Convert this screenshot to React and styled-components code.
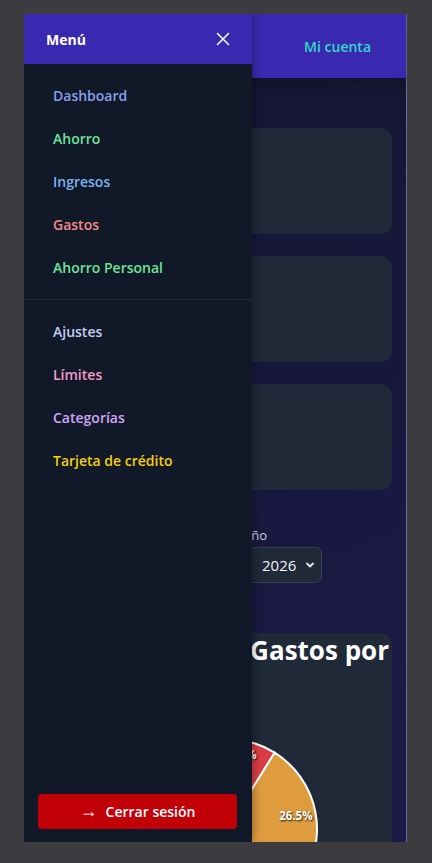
import React from 'react';
import styled, { createGlobalStyle } from 'styled-components';

const GlobalStyle = createGlobalStyle`
    * { box-sizing: border-box; }
    body {
        margin: 0;
        background: #3c3b3f;
        font-family: "Open Sans", "Liberation Sans", sans-serif;
    }
`;

const menuPrincipal = [
    { texto: 'Dashboard', color: '#8c9ef0' },
    { texto: 'Ahorro', color: '#6ee49b' },
    { texto: 'Ingresos', color: '#7fb3f0' },
    { texto: 'Gastos', color: '#f28b8b' },
    { texto: 'Ahorro Personal', color: '#6ee49b' },
];

const menuAjustes = [
    { texto: 'Ajustes', color: '#c3cdf5' },
    { texto: 'Límites', color: '#f39ccb' },
    { texto: 'Categorías', color: '#cfa6f5' },
    { texto: 'Tarjeta de crédito', color: '#f5cf12' },
];

// porciones del pie: inicio y fin en grados desde arriba, en sentido horario
const porciones = [
    { desde: -12, hasta: 32, color: '#dc3d45', label: '12.2%', radio: 74 },
    { desde: 32, hasta: 127.4, color: '#df9c3f', label: '26.5%', radio: 70 },
    { desde: 127.4, hasta: 215, color: '#3b82f6' },
    { desde: 215, hasta: 290, color: '#22c55e' },
    { desde: 290, hasta: 348, color: '#a855f7' },
];

const CX = 173;
const CY = 147;
const R = 90;

const punto = (grados, radio) => {
    const rad = (grados * Math.PI) / 180;
    return [CX + radio * Math.sin(rad), CY - radio * Math.cos(rad)];
};

const arco = (desde, hasta) => {
    const [x1, y1] = punto(desde, R);
    const [x2, y2] = punto(hasta, R);
    const grande = hasta - desde > 180 ? 1 : 0;
    return `M ${CX} ${CY} L ${x1} ${y1} A ${R} ${R} 0 ${grande} 1 ${x2} ${y2} Z`;
};

const App = () => {
    return (
        <>
            <GlobalStyle />
            <Marco>
                <Principal>
                    <Cabecera>
                        <span />
                        <MiCuenta>Mi cuenta</MiCuenta>
                    </Cabecera>
                    <Contenido>
                        <Tarjeta />
                        <Tarjeta />
                        <Tarjeta />
                        <Filtros>
                            <Grupo ancho="193px">
                                <Etiqueta>Mes</Etiqueta>
                                <Selector>
                                    <span>Enero</span>
                                    <Chevron />
                                </Selector>
                            </Grupo>
                            <Grupo ancho="79px">
                                <Etiqueta>Año</Etiqueta>
                                <Selector>
                                    <span>2026</span>
                                    <Chevron />
                                </Selector>
                            </Grupo>
                        </Filtros>
                        <TarjetaGrafico>
                            <Titulo>Distribución de Gastos por</Titulo>
                            <Pie viewBox="0 0 322 240" width="322" height="240">
                                {porciones.map((p, i) => (
                                    <path key={i} d={arco(p.desde, p.hasta)} fill={p.color} stroke="#fff" strokeWidth="2" />
                                ))}
                                {porciones.filter((p) => p.label).map((p) => {
                                    const [x, y] = punto((p.desde + p.hasta) / 2, p.radio);
                                    return (
                                        <PieLabel key={p.label} x={x} y={y} textAnchor="middle" dominantBaseline="middle">
                                            {p.label}
                                        </PieLabel>
                                    );
                                })}
                            </Pie>
                        </TarjetaGrafico>
                    </Contenido>
                </Principal>

                <Sidebar>
                    <SidebarCabecera>
                        <span>Menú</span>
                        <Cerrar aria-label="cerrar">
                            <svg width="14" height="14" viewBox="0 0 14 14">
                                <path d="M1.5 1.5 L12.5 12.5 M12.5 1.5 L1.5 12.5" stroke="#fff" strokeWidth="1.5" strokeLinecap="round" />
                            </svg>
                        </Cerrar>
                    </SidebarCabecera>
                    <Seccion>
                        {menuPrincipal.map((item) => (
                            <Enlace key={item.texto} color={item.color}>{item.texto}</Enlace>
                        ))}
                    </Seccion>
                    <Seccion>
                        {menuAjustes.map((item) => (
                            <Enlace key={item.texto} color={item.color}>{item.texto}</Enlace>
                        ))}
                    </Seccion>
                    <Pie2>
                        <BotonSalir>
                            <Flecha>→</Flecha>
                            Cerrar sesión
                        </BotonSalir>
                    </Pie2>
                </Sidebar>
            </Marco>
        </>
    );
}

const Chevron = () => (
    <svg width="10" height="10" viewBox="0 0 10 10">
        <path d="M2 3.5 L5 6.5 L8 3.5" fill="none" stroke="#e5e7eb" strokeWidth="1.8" strokeLinecap="round" strokeLinejoin="round" />
    </svg>
);

const Marco = styled.div`
    position: relative;
    margin: 14px 0 0 24px;
    width: 383px;
    height: 828px;
    overflow: hidden;
`;

const Principal = styled.div`
    width: 383px;
    height: 828px;
    background: linear-gradient(160deg, #141530 0%, #18183f 55%, #1c1a48 100%);
    border-right: 1px solid #6b6a98;
    display: flex;
    flex-direction: column;
`;

const Cabecera = styled.header`
    height: 64px;
    flex-shrink: 0;
    background: #3a29b0;
    display: flex;
    align-items: center;
    justify-content: space-between;
    padding: 0 35px 0 16px;
    box-shadow: 0 4px 10px rgba(0,0,0,.25);
`;

const MiCuenta = styled.span`
    color: #2fdcc4;
    font-size: 14px;
    font-weight: 600;
`;

const Contenido = styled.main`
    padding: 50px 14px 0 14px;
    display: flex;
    flex-direction: column;
`;

const Tarjeta = styled.div`
    height: 106px;
    background: #1f2937;
    border-radius: 12px;
    margin-bottom: 22px;
`;

const Filtros = styled.div`
    display: flex;
    gap: 12px;
    margin-top: 14px;
`;

const Grupo = styled.div`
    width: ${props => props.ancho};
    display: flex;
    flex-direction: column;
    gap: 3px;
`;

const Etiqueta = styled.label`
    color: #d1d5db;
    font-size: 13px;
    line-height: 18px;
`;

const Selector = styled.div`
    height: 36px;
    background: #1f2937;
    border: 1px solid #374151;
    border-radius: 6px;
    display: flex;
    align-items: center;
    justify-content: space-between;
    padding: 0 6px 0 18px;
    color: #f3f4f6;
    font-size: 15px;
`;

const TarjetaGrafico = styled.section`
    margin-top: 50px;
    background: #1f2937;
    border-radius: 12px;
    padding: 0 16px;
    height: 320px;
`;

const Titulo = styled.h2`
    margin: 0 -13px 0 0;
    display: flex;
    justify-content: flex-end;
    white-space: nowrap;
    color: #fff;
    font-size: 26px;
    font-weight: 700;
    line-height: 34px;
`;

const Pie = styled.svg`
    display: block;
    margin-top: 15px;
`;

const PieLabel = styled.text`
    fill: #fff;
    font-size: 11.5px;
    font-weight: 700;
    font-family: "Open Sans", sans-serif;
    text-shadow: 1px 1px 2px rgba(0,0,0,.85);
`;

const Sidebar = styled.aside`
    position: absolute;
    top: 0;
    left: 0;
    width: 228px;
    height: 100%;
    background: #111827;
    display: flex;
    flex-direction: column;
    box-shadow: 2px 0 8px rgba(0,0,0,.3);
`;

const SidebarCabecera = styled.div`
    height: 50px;
    background: #3a29b0;
    display: flex;
    align-items: center;
    justify-content: space-between;
    padding: 0 22px 0 22px;
    color: #fff;
    font-size: 14px;
    font-weight: 700;
`;

const Cerrar = styled.button`
    background: none;
    border: none;
    padding: 0;
    cursor: pointer;
    display: flex;
`;

const Seccion = styled.nav`
    padding: 10px 0;
    display: flex;
    flex-direction: column;

    & + & {
        border-top: 1px solid #1f2937;
    }
`;

const Enlace = styled.a`
    color: ${props => props.color};
    font-size: 14px;
    font-weight: 600;
    line-height: 19px;
    padding: 12px 29px;
    cursor: pointer;
`;

const Pie2 = styled.div`
    margin-top: auto;
    padding: 0 15px 13px 14px;
`;

const BotonSalir = styled.button`
    width: 100%;
    height: 35px;
    border: none;
    border-radius: 4px;
    background: #c20008;
    color: #fff;
    font-family: inherit;
    font-size: 14px;
    font-weight: 600;
    display: flex;
    align-items: center;
    justify-content: center;
    gap: 8px;
    cursor: pointer;
`;

const Flecha = styled.span`
    font-size: 18px;
    line-height: 1;
    margin-top: -3px;
`;

export default App;
